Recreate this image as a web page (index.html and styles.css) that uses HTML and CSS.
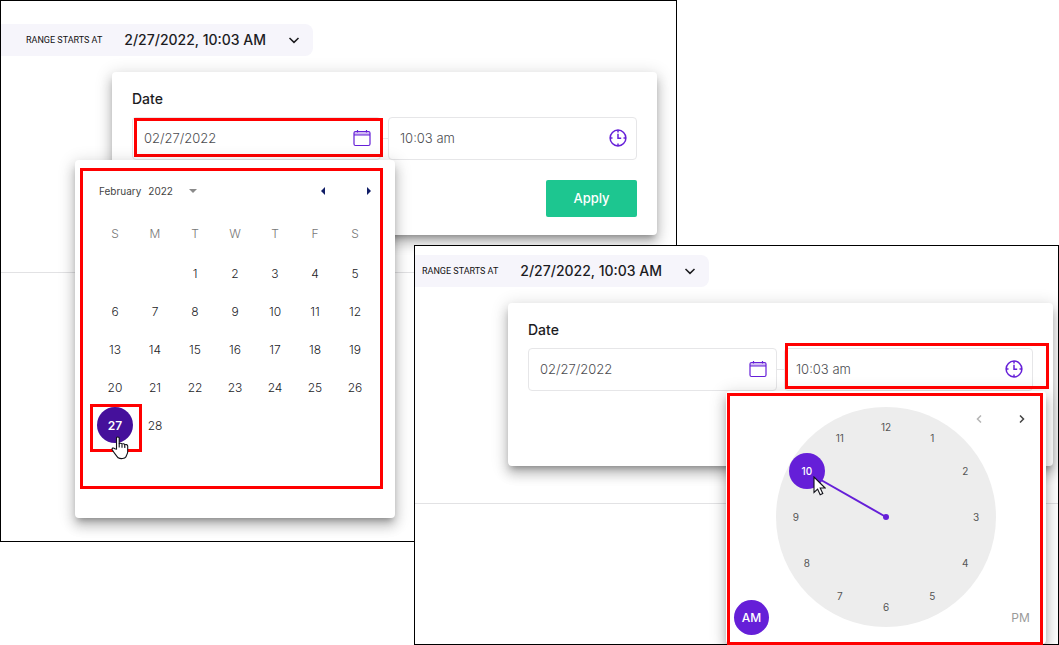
FILE: index.html
```html
<!DOCTYPE html>
<html lang="en">
<head>
<meta charset="utf-8">
<title>Date and time range picker</title>
<link rel="stylesheet" href="styles.css">
</head>
<body>
<svg class="sprite" aria-hidden="true">
  <symbol id="chevron" viewBox="0 0 12 12"><path d="M1.500 4 6 8.400 10.500 4" fill="none" stroke="currentColor" stroke-width="1.500"/></symbol>
  <symbol id="calendar" viewBox="0 0 18 18"><path d="M1 4.500A1.500 1.500 0 0 1 2.500 3h13A1.500 1.500 0 0 1 17 4.500V6H1z" fill="currentColor" opacity=".3"/><path d="M2.500 2.500h13a1.500 1.500 0 0 1 1.500 1.500v11a1.500 1.500 0 0 1-1.500 1.500h-13A1.500 1.500 0 0 1 1 15V4a1.500 1.500 0 0 1 1.500-1.500zM1 6h16M4.500 1v2.500M13.500 1v2.500" fill="none" stroke="currentColor" stroke-width="1.200"/></symbol>
  <symbol id="clock" viewBox="0 0 18 18"><circle cx="9" cy="9" r="7.900" fill="none" stroke="currentColor" stroke-width="1.500"/><path d="M9 1v2.500M9 14.500v2.500M1 9h2.500M14.500 9h2.500M9 4.800V9.200h3.200" fill="none" stroke="currentColor" stroke-width="1.500"/></symbol>
</svg>
<main class="stage">
  <section class="screen screen-date">
    <div class="range">
      <span class="range-label" id="range-a">RANGE STARTS AT</span>
      <button class="range-value" type="button" aria-describedby="range-a"><span>2/27/2022, 10:03 AM</span><svg class="chevron"><use href="#chevron"/></svg></button>
    </div>
    <div class="panel">
      <label class="panel-title" for="date-a">Date</label>
      <div class="fields">
        <div class="field">
          <input class="field-input" id="date-a" type="text" value="02/27/2022">
          <button class="field-icon" type="button" aria-label="Open calendar"><svg><use href="#calendar"/></svg></button>
          <div class="mark mark-date"></div>
          <div class="popup calendar">
            <div class="calendar-head">
              <button class="month" type="button"><span>February</span><span>2022</span><svg class="caret" viewBox="0 0 8 4"><path d="M0 0h8L4 4z"/></svg></button>
              <div class="steps">
                <button class="step" type="button" aria-label="Previous month"><svg viewBox="0 0 4 8"><path d="M4 0v8L0 4z"/></svg></button>
                <button class="step" type="button" aria-label="Next month"><svg viewBox="0 0 4 8"><path d="M0 0v8l4-4z"/></svg></button>
              </div>
            </div>
            <table class="days">
              <thead><tr><th>S</th><th>M</th><th>T</th><th>W</th><th>T</th><th>F</th><th>S</th></tr></thead>
              <tbody>
                <tr><td></td><td></td><td>1</td><td>2</td><td>3</td><td>4</td><td>5</td></tr>
                <tr><td>6</td><td>7</td><td>8</td><td>9</td><td>10</td><td>11</td><td>12</td></tr>
                <tr><td>13</td><td>14</td><td>15</td><td>16</td><td>17</td><td>18</td><td>19</td></tr>
                <tr><td>20</td><td>21</td><td>22</td><td>23</td><td>24</td><td>25</td><td>26</td></tr>
                <tr><td class="selected"><button class="day" type="button">27</button><span class="mark mark-day"></span>
                  <svg class="pointer hand" viewBox="0 0 18 24"><path d="M5.500 13V2.200C5.500.6 8.200.6 8.200 2.200V8c.3-1.100 2.700-.9 2.800.4.400-1.100 2.700-.8 2.800.7.500-1 2.900-.6 2.900 1v6c0 2-1.600 3-1.600 4.500-1.500 2.200-5.300 2.600-8 1.200-1.500-2-4-4.800-5.900-8.100-.7-1.600 1.300-2.300 2.500-1z" fill="#fff" stroke="#101018" stroke-width="1.100"/><path d="M8.200 7.500v4M11 8.500v3.200M13.800 9.500v2.500" fill="none" stroke="#101018" stroke-width="1.100"/></svg></td><td>28</td><td></td><td></td><td></td><td></td><td></td></tr>
              </tbody>
            </table>
            <div class="mark mark-calendar"></div>
          </div>
        </div>
        <div class="field">
          <input class="field-input" type="text" value="10:03 am" aria-label="Time">
          <button class="field-icon" type="button" aria-label="Open clock"><svg><use href="#clock"/></svg></button>
        </div>
      </div>
      <button class="apply" type="button">Apply</button>
    </div>
    <hr class="rule">
  </section>

  <section class="screen screen-time">
    <div class="range">
      <span class="range-label" id="range-b">RANGE STARTS AT</span>
      <button class="range-value" type="button" aria-describedby="range-b"><span>2/27/2022, 10:03 AM</span><svg class="chevron"><use href="#chevron"/></svg></button>
    </div>
    <div class="panel">
      <label class="panel-title" for="date-b">Date</label>
      <div class="fields">
        <div class="field">
          <input class="field-input" id="date-b" type="text" value="02/27/2022">
          <button class="field-icon" type="button" aria-label="Open calendar"><svg><use href="#calendar"/></svg></button>
        </div>
        <div class="field">
          <input class="field-input" type="text" value="10:03 am" aria-label="Time">
          <button class="field-icon" type="button" aria-label="Open clock"><svg><use href="#clock"/></svg></button>
          <div class="popup clock">
            <div class="face">
              <svg class="needle" viewBox="0 0 220 220"><path d="M31 65 110 110" stroke="currentColor" stroke-width="2"/><circle cx="110" cy="110" r="3" fill="currentColor"/></svg>
              <button class="hour h1" type="button">1</button>
              <button class="hour h2" type="button">2</button>
              <button class="hour h3" type="button">3</button>
              <button class="hour h4" type="button">4</button>
              <button class="hour h5" type="button">5</button>
              <button class="hour h6" type="button">6</button>
              <button class="hour h7" type="button">7</button>
              <button class="hour h8" type="button">8</button>
              <button class="hour h9" type="button">9</button>
              <button class="hour h10 chosen" type="button">10</button>
              <button class="hour h11" type="button">11</button>
              <button class="hour h12" type="button">12</button>
              <svg class="pointer arrow" viewBox="0 0 13 20"><path d="M1 1v15.500l3.600-3.400 2.600 5.600 2.600-1.200-2.600-5.500h4.900z" fill="#fff" stroke="#101018" stroke-width="1.100"/></svg>
            </div>
            <div class="clock-nav">
              <button class="nav off" type="button" aria-label="Back"><svg viewBox="0 0 6 8"><path d="M5 .5 1.500 4 5 7.500"/></svg></button>
              <button class="nav" type="button" aria-label="Forward"><svg viewBox="0 0 6 8"><path d="M1 .5 4.500 4 1 7.500"/></svg></button>
            </div>
            <div class="halves">
              <button class="half active" type="button">AM</button>
              <button class="half" type="button">PM</button>
            </div>
            <div class="mark mark-clock"></div>
          </div>
          <div class="mark mark-time"></div>
        </div>
      </div>
      <button class="apply" type="button">Apply</button>
    </div>
    <hr class="rule">
  </section>
</main>
</body>
</html>
```

FILE: styles.css
```css
* { box-sizing: border-box; }

body {
  margin: 0;
  background: #fff;
  color: #1c1c1f;
  font-family: Inter, "Liberation Sans", sans-serif;
  font-size: 13px;
}

button {
  padding: 0;
  border: 0;
  background: none;
  color: inherit;
  font: inherit;
}

svg { display: block; }

.sprite {
  position: absolute;
  width: 0;
  height: 0;
}

.stage {
  display: grid;
  grid-template-columns: 414fr 263fr 382fr;
  grid-template-rows: 245px 297px 103px;
}

.screen {
  border: 1px solid #000;
  background: #fff;
}

.screen-date {
  grid-area: 1 / 1 / 3 / 3;
  padding-top: 23px;
}

.screen-time {
  grid-area: 2 / 2 / 4 / 4;
  z-index: 1;
  padding-top: 9px;
}

/* Range summary */
.range {
  display: flex;
  align-items: center;
  gap: 22px;
  width: fit-content;
  height: 32px;
  padding: 0 13px 0 25px;
  border-radius: 0 8px 8px 0;
  background: #f6f5fb;
}

.screen-time .range { padding-left: 7px; }

.range-label {
  color: #111;
  font-family: Roboto, sans-serif;
  font-size: 9px;
}

.range-value {
  display: flex;
  align-items: center;
  gap: 22px;
  font-size: 14px;
  font-weight: 500;
}

.range-value span { padding-bottom: 2px; }

.chevron {
  width: 12px;
  height: 12px;
}

/* Panel */
.panel {
  display: flex;
  flex-direction: column;
  margin: 16px 19px 0 111px;
  padding: 16px 20px 18px;
  border-radius: 4px;
  background: #fff;
  box-shadow: 0 5px 6px -3px rgba(0, 0, 0, .3), 0 8px 12px 1px rgba(0, 0, 0, .16), 0 3px 16px 3px rgba(0, 0, 0, .12);
}

.screen-time .panel { margin: 16px 5px 0 93px; }

.panel-title {
  font-size: 14px;
  font-weight: 500;
  line-height: 22px;
}

.fields {
  display: grid;
  grid-template-columns: 1fr 1fr;
  gap: 7px;
  margin: 7px 0 20px;
  background: linear-gradient(#e6e6e8, #e6e6e8) center / 100% 1px no-repeat;
}

.field {
  position: relative;
  display: flex;
  align-items: center;
  height: 43px;
  padding: 0 9px 1px 11px;
  border: 1px solid #e6e6e8;
  border-radius: 4px;
  background: #fff;
}

.field-input {
  flex: 1;
  min-width: 0;
  padding: 0;
  border: 0;
  outline: 0;
  background: none;
  color: #4c4c50;
  font: inherit;
  font-weight: 300;
}

.field-icon { color: #651fd8; }

.field-icon svg {
  width: 18px;
  height: 18px;
}

.apply {
  align-self: flex-end;
  width: 91px;
  height: 37px;
  padding-bottom: 1px;
  border-radius: 2px;
  background: #1dc690;
  color: #fff;
  font-weight: 500;
}

.screen-time .apply { visibility: hidden; }

.rule {
  height: 1px;
  margin: 37px 0 0;
  border: 0;
  background: #e2e2e4;
}

/* Red callout outlines */
.mark {
  position: absolute;
  border: 3px solid #f00;
  pointer-events: none;
}

.mark-date { inset: 0 -3px 2px 1px; }
.mark-time { inset: -6px -17px 1px 0; }
.mark-calendar { inset: 8px 12px 29px 5px; }
.mark-day { inset: -2px -7px -8px -5px; }
.mark-clock { inset: 2px 3px -1px 1px; }

/* Popups */
.popup {
  position: absolute;
  width: 320px;
  border-radius: 4px;
  background: #fff;
  box-shadow: 0 5px 6px -3px rgba(0, 0, 0, .3), 0 8px 12px 1px rgba(0, 0, 0, .16), 0 3px 16px 3px rgba(0, 0, 0, .12);
}

.calendar {
  top: 42px;
  left: -58px;
  z-index: 1;
  padding: 21px 20px 74px;
}

.calendar-head {
  display: flex;
  justify-content: space-between;
  align-items: center;
  height: 20px;
  padding: 0 4px;
}

.month {
  display: flex;
  align-items: center;
  gap: 7px;
  color: #444;
  font-size: 10px;
}

.caret {
  width: 8px;
  height: 4px;
  margin-left: 9px;
  fill: #8a8a8a;
}

.steps {
  display: flex;
  gap: 42px;
}

.step svg {
  width: 4px;
  height: 8px;
  fill: #101d66;
}

.days {
  width: 100%;
  margin-top: 11px;
  border-collapse: collapse;
  table-layout: fixed;
  font-size: 12px;
}

.days th,
.days td {
  height: 38px;
  padding: 0;
  font-weight: 300;
  text-align: center;
}

.days th {
  height: 42px;
  color: #777;
}

.days td { color: #1c1c1f; }

.days .selected { position: relative; }

.day {
  width: 36px;
  height: 36px;
  border-radius: 50%;
  background: #45109b;
  color: #fff;
  font-weight: 600;
}

.pointer {
  position: absolute;
  z-index: 2;
}

.hand {
  top: 30px;
  left: 16px;
  width: 18px;
  height: 24px;
}

/* Clock */
.clock {
  top: 42px;
  right: -14px;
  display: grid;
  padding: 16px 8px 9px;
  height: 253px;
}

.face,
.clock-nav,
.halves { grid-area: 1 / 1; }

.face {
  position: relative;
  justify-self: center;
  width: 220px;
  height: 220px;
  border-radius: 50%;
  background: #ededed;
}

.needle {
  width: 220px;
  height: 220px;
  color: #651fd8;
}

.hour {
  position: absolute;
  width: 36px;
  height: 36px;
  margin: -18px 0 0 -18px;
  border-radius: 50%;
  color: #555;
  font-size: 10px;
}

.h1 { left: 71%; top: 14%; }
.h2 { left: 86%; top: 29%; }
.h3 { left: 91%; top: 50%; }
.h4 { left: 86%; top: 71%; }
.h5 { left: 71%; top: 86%; }
.h6 { left: 50%; top: 91%; }
.h7 { left: 29%; top: 86%; }
.h8 { left: 14%; top: 71%; }
.h9 { left: 9%; top: 50%; }
.h10 { left: 14%; top: 29%; }
.h11 { left: 29%; top: 14%; }
.h12 { left: 50%; top: 9%; }

.chosen {
  background: #651fd8;
  color: #fff;
  font-weight: 500;
}

.arrow {
  top: 69px;
  left: 37px;
  width: 13px;
  height: 20px;
}

.clock-nav {
  display: flex;
  gap: 37px;
  place-self: start end;
  padding: 8px 13px 0 0;
}

.nav {
  color: #444;
}

.nav.off { color: #b4b4b4; }

.nav svg {
  width: 6px;
  height: 8px;
  fill: none;
  stroke: currentColor;
  stroke-width: 1.5;
}

.halves {
  display: flex;
  justify-content: space-between;
  align-self: end;
  z-index: 1;
}

.half {
  width: 35px;
  height: 35px;
  border-radius: 50%;
  color: #9a9a9a;
  font-size: 12px;
}

.half.active {
  background: #651fd8;
  color: #fff;
  font-weight: 500;
}
```
